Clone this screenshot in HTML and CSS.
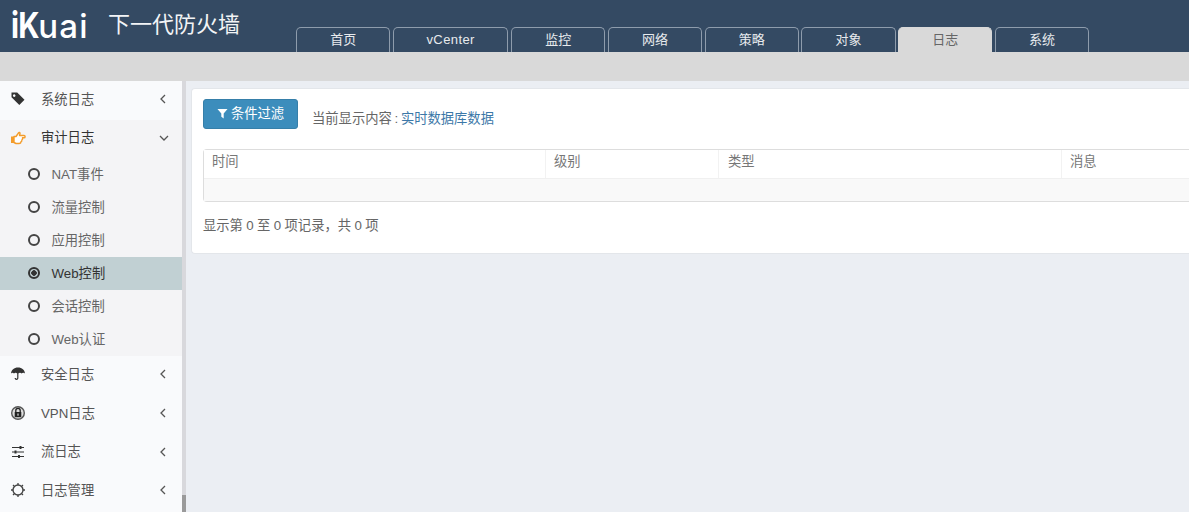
FILE: index.html
```html
<!DOCTYPE html>
<html lang="zh">
<head>
<meta charset="utf-8">
<title>iKuai 下一代防火墙</title>
<link rel="stylesheet" href="styles.css">
</head>
<body>
<header class="top">
  <div class="brand"><span class="logo"><b class="logo-k">iK</b><span class="logo-u">uai</span></span><span class="product">下一代防火墙</span></div>
  <nav class="tabs">
    <a class="tab">首页</a>
    <a class="tab tab-wide">vCenter</a>
    <a class="tab">监控</a>
    <a class="tab">网络</a>
    <a class="tab">策略</a>
    <a class="tab">对象</a>
    <a class="tab active">日志</a>
    <a class="tab">系统</a>
  </nav>
</header>
<div class="band"></div>
<div class="main">
  <aside class="side">
    <ul class="menu">
      <li class="item">
        <svg class="ico" viewBox="0 0 16 16"><path d="M1.500 1.500h5.700l7.300 7.300-5.200 5.200-7.800-7.700z M4.200 3.300a1.300 1.300 0 1 0 .01 0z" fill="#333" fill-rule="evenodd"/></svg>
        <span class="label">系统日志</span>
        <svg class="chev" viewBox="0 0 8 10"><path d="M6 1 2 5l4 4" fill="none" stroke="#555" stroke-width="1.3"/></svg>
      </li>
      <li class="item open">
        <svg class="ico" viewBox="0 0 16 16"><path d="M4 6.500h2L8.500 3c.5-1 1.500-.5 1.500.5l-.5 2H14c1.500 0 1.500 2.300 0 2.300h-1.500c.3 1.200-.2 1.900-.7 2.200.2 1-.3 1.700-.8 1.800 0 1.200-1 1.700-2 1.700H6l-2-1z" fill="#fff" stroke="#f39c2b" stroke-width="1.400" stroke-linejoin="round"/><path d="M1 6.500h3v6.500H1z" fill="#f39c2b"/></svg>
        <span class="label">审计日志</span>
        <svg class="chev down" viewBox="0 0 10 8"><path d="M1 2l4 4 4-4" fill="none" stroke="#555" stroke-width="1.3"/></svg>
      </li>
      <li class="subs">
        <a class="sub"><i class="dot"></i>NAT事件</a>
        <a class="sub"><i class="dot"></i>流量控制</a>
        <a class="sub"><i class="dot"></i>应用控制</a>
        <a class="sub current"><i class="dot"></i>Web控制</a>
        <a class="sub"><i class="dot"></i>会话控制</a>
        <a class="sub"><i class="dot"></i>Web认证</a>
      </li>
      <li class="item">
        <svg class="ico" viewBox="0 0 16 16"><path d="M8 1.500C4 1.500 1.300 4 1 7.500c.8-1 2.200-1 3 0 .8-1 2.400-1 3.200 0V12c0 1-1.300 1-1.400 0H4.600c0 2.600 3.800 2.600 3.800 0V7.500c.8-1 2.400-1 3.200 0 .8-1 2.600-1 3.400 0C14.700 4 12 1.500 8 1.500z" fill="#333"/></svg>
        <span class="label">安全日志</span>
        <svg class="chev" viewBox="0 0 8 10"><path d="M6 1 2 5l4 4" fill="none" stroke="#555" stroke-width="1.3"/></svg>
      </li>
      <li class="item">
        <svg class="ico" viewBox="0 0 16 16"><circle cx="8" cy="8" r="7" fill="#555"/><circle cx="8" cy="8" r="5.600" fill="#ddd"/><path d="M4.700 7h6.600v5.200H4.700z" fill="#222"/><path d="M5.800 7V5.500a2.200 2.200 0 0 1 4.400 0V7" fill="none" stroke="#222" stroke-width="1.300"/><rect x="7.400" y="8.500" width="1.200" height="2.200" fill="#ddd"/></svg>
        <span class="label">VPN日志</span>
        <svg class="chev" viewBox="0 0 8 10"><path d="M6 1 2 5l4 4" fill="none" stroke="#555" stroke-width="1.3"/></svg>
      </li>
      <li class="item">
        <svg class="ico" viewBox="0 0 16 16"><path d="M2 3.500h12M2 8h12M2 12.500h12" stroke="#333" stroke-width="1.200"/><path d="M9.500 2h2v3h-2zM4.500 6.500h2v3h-2zM8 11h2v3H8z" fill="#333"/></svg>
        <span class="label">流日志</span>
        <svg class="chev" viewBox="0 0 8 10"><path d="M6 1 2 5l4 4" fill="none" stroke="#555" stroke-width="1.3"/></svg>
      </li>
      <li class="item">
        <svg class="ico" viewBox="0 0 16 16"><circle cx="8" cy="8" r="5" fill="none" stroke="#444" stroke-width="1.400"/><path d="M8 1v2M8 13v2M1 8h2M13 8h2M3 3l1.400 1.400M11.600 11.600 13 13M13 3l-1.400 1.400M4.400 11.600 3 13" stroke="#444" stroke-width="1.300"/></svg>
        <span class="label">日志管理</span>
        <svg class="chev" viewBox="0 0 8 10"><path d="M6 1 2 5l4 4" fill="none" stroke="#555" stroke-width="1.3"/></svg>
      </li>
    </ul>
  </aside>
  <div class="scroll"><div class="thumb"></div></div>
  <section class="content">
    <div class="card">
      <div class="toolbar">
        <button class="btn"><svg class="funnel" viewBox="0 0 12 12"><path d="M.5 1h11L7.300 6v5.500L4.700 9.500V6z" fill="#fff"/></svg><span class="btn-text">条件过滤</span></button>
        <span class="status">当前显示内容 : <a class="link">实时数据库数据</a></span>
      </div>
      <div class="table">
        <div class="row head">
          <div class="cell c1">时间</div>
          <div class="cell c2">级别</div>
          <div class="cell c3">类型</div>
          <div class="cell c4">消息</div>
        </div>
        <div class="row empty"></div>
      </div>
      <p class="info">显示第 0 至 0 项记录，共 0 项</p>
    </div>
  </section>
</div>
</body>
</html>
```
FILE: styles.css
```css
* { box-sizing: border-box; }
html, body { margin: 0; height: 100%; overflow: hidden; }
body {
  font-family: "Liberation Sans", "Noto Sans CJK SC", sans-serif;
  font-size: 13.300px;
  color: #666;
  background: #ebeef3;
  width: 1189px;
  height: 512px;
}
ul { list-style: none; margin: 0; padding: 0; }

.top {
  height: 52px;
  background: #344a63;
  display: flex;
  align-items: flex-start;
}
.brand {
  width: 296px;
  flex: none;
  display: flex;
  align-items: flex-start;
  height: 52px;
  padding-left: 11px;
  color: #fff;
}
.logo {
  font-family: "Inter", sans-serif;
  font-size: 36px;
  line-height: 50px;
  width: 97px;
  flex: none;
  white-space: nowrap;
}
.logo-k {
  display: inline-block;
  font-weight: 700;
  letter-spacing: -1px;
  transform: scaleX(.82);
  transform-origin: left;
  margin-right: -6.500px;
}
.logo-u { font-weight: 500; font-size: 33px; letter-spacing: 1.300px; }
.product { font-size: 22px; line-height: 50px; color: #f2f4f6; }

.tabs {
  display: flex;
  gap: 2.500px;
  padding-top: 27px;
}
.tab {
  width: 94.300px;
  height: 25px;
  line-height: 23px;
  text-align: center;
  font-size: 13px;
  color: #e8ebee;
  border: 1px solid #8e9cac;
  border-bottom: 0;
  border-radius: 5px 5px 0 0;
}
.tab-wide { width: 115.700px; letter-spacing: .4px; }
.tab.active { background: #d9d9d9; color: #666; border-color: #d9d9d9; }

.band { height: 29px; background: #d9d9d9; }

.main { display: flex; height: 431px; }
.side {
  width: 182px;
  flex: none;
  background: #f9fafc;
  color: #555;
}
.item {
  height: 38.700px;
  display: flex;
  align-items: center;
  padding: 0 15px 2px 10px;
}
.item.open { height: 38.300px; background: #f4f4f6; color: #333; }
.ico { width: 16px; height: 16px; flex: none; margin-right: 15px; }
.label { flex: 1; padding-bottom: 2px; }
.chev { width: 8px; height: 10px; flex: none; }
.chev.down { width: 10px; height: 8px; margin-right: -2px; }

.subs { background: #f4f4f6; }
.sub {
  height: 33px;
  display: flex;
  align-items: center;
  padding: 0 0 1px 28px;
  color: #666;
}
.sub.current { background: #c1d0d3; color: #333; }
.dot {
  width: 12px;
  height: 12px;
  border: 2px solid #444;
  border-radius: 50%;
  margin-right: 11.500px;
  flex: none;
}
.sub.current .dot {
  background: radial-gradient(circle, #333 0 2.500px, transparent 3px);
  border-color: #333;
}

.scroll {
  width: 4px;
  flex: none;
  background: #d8d8dc;
  display: flex;
  flex-direction: column;
  justify-content: flex-end;
}
.thumb { height: 17px; background: #9a9a9a; }

.content { flex: 1; min-width: 0; padding: 7px 0 0 5px; }
.card {
  width: 1010px;
  height: 166px;
  background: #fff;
  border: 1px solid #e3e6ea;
  border-right: 0;
  border-radius: 4px 0 0 4px;
  padding: 10px 0 0 11px;
}
.toolbar { display: flex; align-items: flex-start; height: 50px; }
.btn {
  width: 95px;
  height: 30px;
  background: #3c8dbc;
  border: 1px solid #367fa9;
  border-radius: 3px;
  color: #fff;
  font: inherit;
  padding: 0 0 2px;
  display: flex;
  align-items: center;
  justify-content: center;
  gap: 3px;
}
.btn-text { padding-bottom: 2px; }
.funnel { width: 11px; height: 11px; }
.status { margin: 11px 0 0 14px; line-height: 18px; color: #666; word-spacing: -1px; }
.link { color: #3c78a8; }

.table {
  width: 1000px;
  height: 53px;
  border: 1px solid #ddd;
  border-right: 0;
  border-radius: 4px 0 0 4px;
}
.row { display: flex; }
.head { height: 28px; background: #fff; }
.cell { padding: 2px 8px; line-height: 20px; border-right: 1px solid #f2f2f2; flex: none; color: #777; }
.c1 { width: 342px; }
.c2 { width: 173px; }
.c3 { width: 343px; padding-left: 9px; }
.c4 { border-right: 0; }
.empty { height: 23px; background: #f9f9f9; border-top: 1px solid #f0f0f0; }
.info { margin: 15px 0 0; line-height: 18px; color: #666; word-spacing: -.3px; }
```
